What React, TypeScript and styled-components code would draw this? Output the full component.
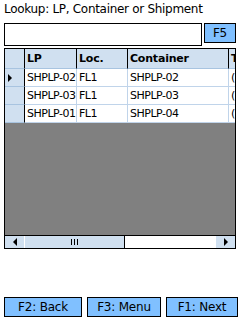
import styled, { createGlobalStyle } from "styled-components";

const GlobalStyle = createGlobalStyle`
  html, body {
    margin: 0;
    padding: 0;
    background: #fff;
  }
  body {
    font-family: "DejaVu Sans", Tahoma, sans-serif;
    color: #000;
  }
`;

const Screen = styled.div`
  width: 240px;
  height: 320px;
  display: flex;
  flex-direction: column;
  overflow: hidden;
`;

const Title = styled.div`
  font-size: 12px;
  line-height: 14px;
  letter-spacing: -0.3px;
  padding: 2px 0 0 4px;
  height: 19px;
  box-sizing: border-box;
  white-space: nowrap;
`;

const LookupRow = styled.div`
  display: flex;
  align-items: flex-start;
  padding: 4px 0 0 4px;
  gap: 2px;
`;

const LookupInput = styled.input`
  width: 198px;
  height: 23px;
  box-sizing: border-box;
  border: 1px solid #000;
  margin: 0;
  padding: 0 3px;
  font: inherit;
  font-size: 12px;
  outline: none;
`;

const KeyButton = styled.button<{ $width: number }>`
  width: ${(p) => p.$width}px;
  height: 20px;
  box-sizing: border-box;
  border: 1px solid #000;
  background: #80c0ff;
  margin: 0;
  padding: 0;
  font-family: "DejaVu Sans", Tahoma, sans-serif;
  font-size: 12px;
  letter-spacing: -0.2px;
  color: #000;
`;

const Grid = styled.div`
  margin: 2px 0 0 4px;
  width: 232px;
  height: 201px;
  box-sizing: border-box;
  border: 1px solid #000;
  display: flex;
  flex-direction: column;
  overflow: hidden;
`;

const GridRow = styled.div<{ $header?: boolean }>`
  display: grid;
  grid-template-columns: 20px 52px 51px 101px 20px;
  height: ${(p) => (p.$header ? 20 : 18)}px;
  flex: none;
  background: ${(p) => (p.$header ? "#d0e0f0" : "#fff")};
`;

const Cell = styled.div<{ $header?: boolean }>`
  box-sizing: border-box;
  border-right: 1px solid ${(p) => (p.$header ? "#000" : "#c0d4ea")};
  border-bottom: 1px solid ${(p) => (p.$header ? "#a8c4e0" : "#c0d4ea")};
  font-size: 11px;
  letter-spacing: ${(p) => (p.$header ? "-0.2px" : "-0.5px")};
  font-weight: ${(p) => (p.$header ? "bold" : "normal")};
  padding-left: 2px;
  display: flex;
  align-items: center;
  white-space: nowrap;
  overflow: hidden;
`;

const RowHead = styled.div`
  box-sizing: border-box;
  background: #d0e0f0;
  border-right: 1px solid #000;
  border-bottom: 1px solid #a8c4e0;
  display: flex;
  align-items: center;
  padding-left: 3px;
`;

const Pointer = styled.div`
  width: 0;
  height: 0;
  border-top: 4px solid transparent;
  border-bottom: 4px solid transparent;
  border-left: 4px solid #000;
`;

const EmptyArea = styled.div`
  flex: 1;
  background: #808080;
`;

const ScrollBar = styled.div`
  height: 12px;
  flex: none;
  display: grid;
  grid-template-columns: 19px 101px 1fr 19px;
  border-top: 1px solid #000;
  background: #fff;
`;

const ScrollButton = styled.div`
  background: #d0e0f0;
  display: flex;
  align-items: center;
  justify-content: center;
`;

const Thumb = styled.div`
  background: #d0e0f0;
  border-left: 1px solid #fff;
  border-right: 1px solid #000;
  display: flex;
  align-items: center;
  justify-content: center;
  gap: 2px;
`;

const Grip = styled.div`
  width: 1px;
  height: 6px;
  background: #000;
`;

const Arrow = styled.div<{ $dir: "left" | "right" }>`
  width: 0;
  height: 0;
  border-top: 4px solid transparent;
  border-bottom: 4px solid transparent;
  ${(p) =>
    p.$dir === "left"
      ? "border-right: 4px solid #000;"
      : "border-left: 4px solid #000;"}
`;

const Footer = styled.div`
  margin-top: auto;
  display: flex;
  padding: 0 0 3px 4px;
  gap: 5px;
`;

const rows = [
  { lp: "SHPLP-02", loc: "FL1", container: "SHPLP-02", current: true },
  { lp: "SHPLP-03", loc: "FL1", container: "SHPLP-03" },
  { lp: "SHPLP-01", loc: "FL1", container: "SHPLP-04" },
];

export default function App() {
  return (
    <Screen>
      <GlobalStyle />
      <Title>Lookup: LP, Container or Shipment</Title>
      <LookupRow>
        <LookupInput />
        <KeyButton $width={32}>F5</KeyButton>
      </LookupRow>
      <Grid>
        <GridRow $header>
          <RowHead />
          <Cell $header>LP</Cell>
          <Cell $header>Loc.</Cell>
          <Cell $header>Container</Cell>
          <Cell $header>T</Cell>
        </GridRow>
        {rows.map((r) => (
          <GridRow key={r.lp}>
            <RowHead>{r.current && <Pointer />}</RowHead>
            <Cell>{r.lp}</Cell>
            <Cell>{r.loc}</Cell>
            <Cell>{r.container}</Cell>
            <Cell>(</Cell>
          </GridRow>
        ))}
        <EmptyArea />
        <ScrollBar>
          <ScrollButton>
            <Arrow $dir="left" />
          </ScrollButton>
          <Thumb>
            <Grip />
            <Grip />
            <Grip />
          </Thumb>
          <div />
          <ScrollButton>
            <Arrow $dir="right" />
          </ScrollButton>
        </ScrollBar>
      </Grid>
      <Footer>
        <KeyButton $width={78}>F2: Back</KeyButton>
        <KeyButton $width={74}>F3: Menu</KeyButton>
        <KeyButton $width={72}>F1: Next</KeyButton>
      </Footer>
    </Screen>
  );
}
